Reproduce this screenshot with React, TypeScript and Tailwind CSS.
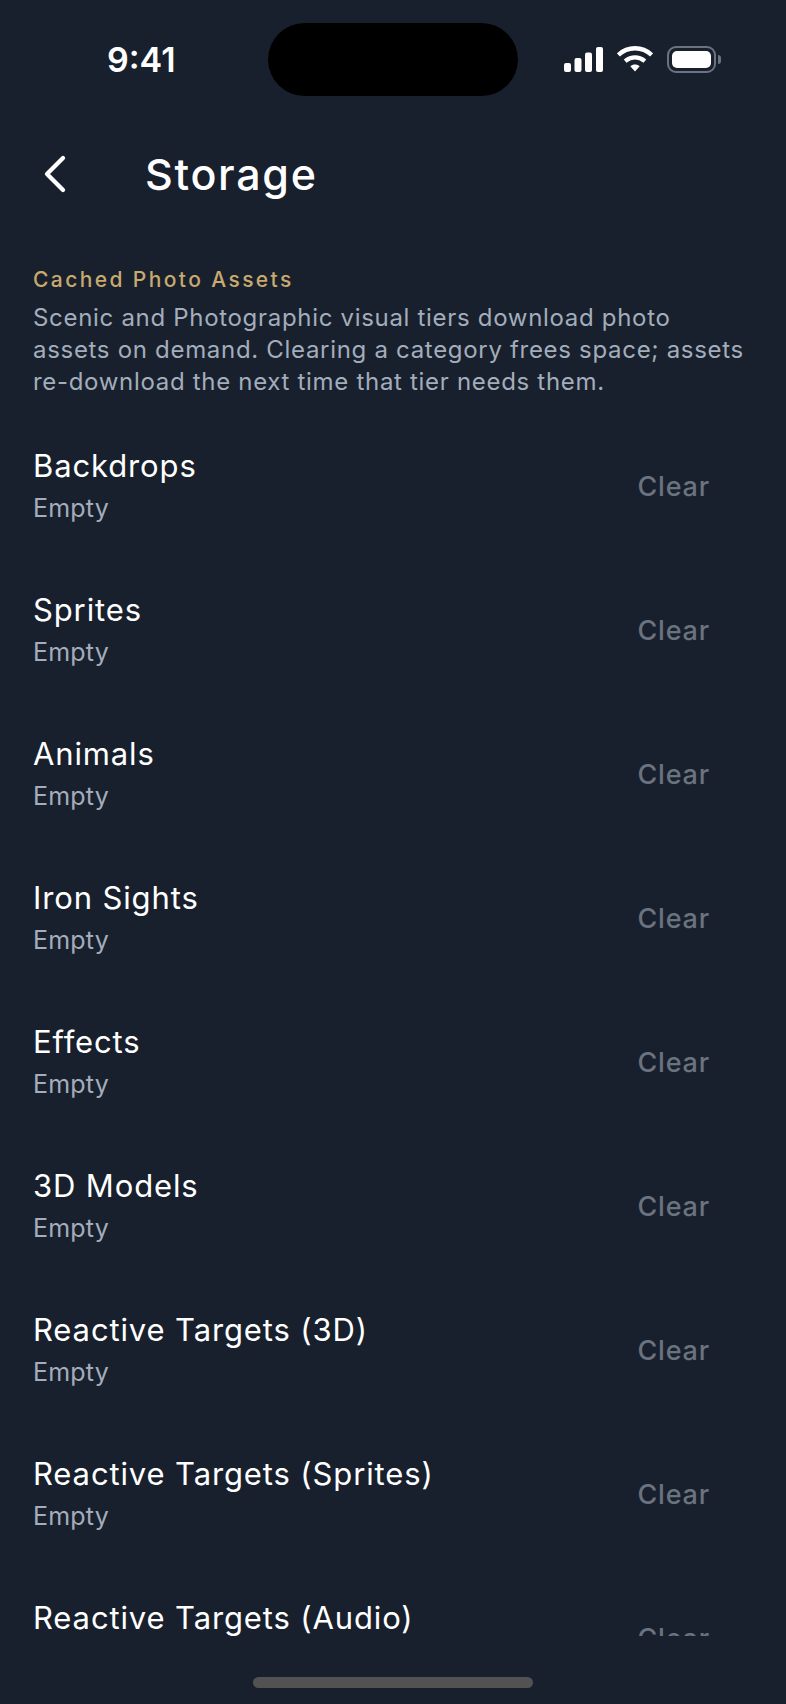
import React from 'react';
import { ChevronLeft } from 'lucide-react';

const categories = [
  'Backdrops',
  'Sprites',
  'Animals',
  'Iron Sights',
  'Effects',
  '3D Models',
  'Reactive Targets (3D)',
  'Reactive Targets (Sprites)',
  'Reactive Targets (Audio)',
];

function StatusIcons() {
  return (
    <div className="flex items-center gap-[14px]">
      <svg width="39" height="25" viewBox="0 0 39 25" fill="#fff">
        <rect x="0" y="16" width="7" height="9" rx="2" />
        <rect x="10.5" y="11" width="7" height="14" rx="2" />
        <rect x="21" y="5.5" width="7" height="19.5" rx="2" />
        <rect x="32" y="0" width="7" height="25" rx="2" />
      </svg>
      <svg width="36" height="27" viewBox="0 0 34 26" fill="none" stroke="#fff" strokeWidth="4.2" className="-mt-[2px]">
        <path d="M1 9.500C10 1 24 1 33 9.500" />
        <path d="M7.500 15.500C13.500 10.800 20.500 10.800 26.500 15.500" />
        <path d="M12.500 20.500L17 25.500L21.500 20.500C19 18.200 15 18.200 12.500 20.500Z" fill="#fff" stroke="none" />
      </svg>
      <div className="flex items-center gap-[2px]">
        <div className="w-[49px] h-[27px] rounded-[9px] border-2 border-[#6b7280] p-[3px]">
          <div className="w-full h-full rounded-[5px] bg-white" />
        </div>
        <div className="w-[3px] h-[9px] rounded-r-full bg-[#6b7280]" />
      </div>
    </div>
  );
}

function StorageRow({ title }: { title: string }) {
  return (
    <div className="flex items-center justify-between h-[144px] shrink-0 pl-[33px] pr-[76px]">
      <div className="pt-[1px]">
        <div className="text-[31px] leading-[40px] font-normal text-white tracking-[0.87px]">{title}</div>
        <div className="text-[25px] leading-[36px] text-[#a3adbb] mt-[4px] tracking-[0.2px]">Empty</div>
      </div>
      <div className="text-[27px] leading-[36px] font-medium text-[#6b7280] tracking-[0.8px] mt-[3px]">Clear</div>
    </div>
  );
}

export default function App() {
  return (
    <div className="relative w-[786px] h-[1704px] overflow-hidden flex flex-col bg-[#18202d] font-['Inter',sans-serif]">
      <div className="shrink-0 h-[119px] flex items-start pt-[23px] pl-[107px] pr-[65px] justify-between">
        <div className="text-[34px] leading-[73px] font-semibold text-white">9:41</div>
        <div className="h-[73px] flex items-center">
          <StatusIcons />
        </div>
      </div>
      <div className="absolute left-[268px] top-[23px] w-[250px] h-[73px] rounded-full bg-black" />
      <div className="shrink-0 h-[112px] flex items-center pl-[33px]">
        <ChevronLeft size={64} strokeWidth={1.6} className="text-white -ml-[10px] -mt-[2px]" />
        <h1 className="ml-[58px] -mt-[2px] text-[43px] leading-[50px] font-medium text-white tracking-[1.7px]">Storage</h1>
      </div>
      <div className="shrink-0 px-[33px] pt-[33px]">
        <div className="text-[21px] leading-[32px] font-medium text-[#c8a96e] tracking-[2.4px]">Cached Photo Assets</div>
        <p className="mt-[6px] text-[24px] leading-[32px] text-[#a3adbb] tracking-[0.69px] whitespace-nowrap">
          Scenic and Photographic visual tiers download photo
          <br />
          assets on demand. Clearing a category frees space; assets
          <br />
          re-download the next time that tier needs them.
        </p>
      </div>
      <div className="h-[1238px] shrink-0 overflow-hidden pt-[15px]">
        {categories.map((c) => (
          <StorageRow key={c} title={c} />
        ))}
      </div>
      <div className="absolute left-[253px] top-[1677px] w-[280px] h-[11px] rounded-full bg-[#525252]" />
    </div>
  );
}
